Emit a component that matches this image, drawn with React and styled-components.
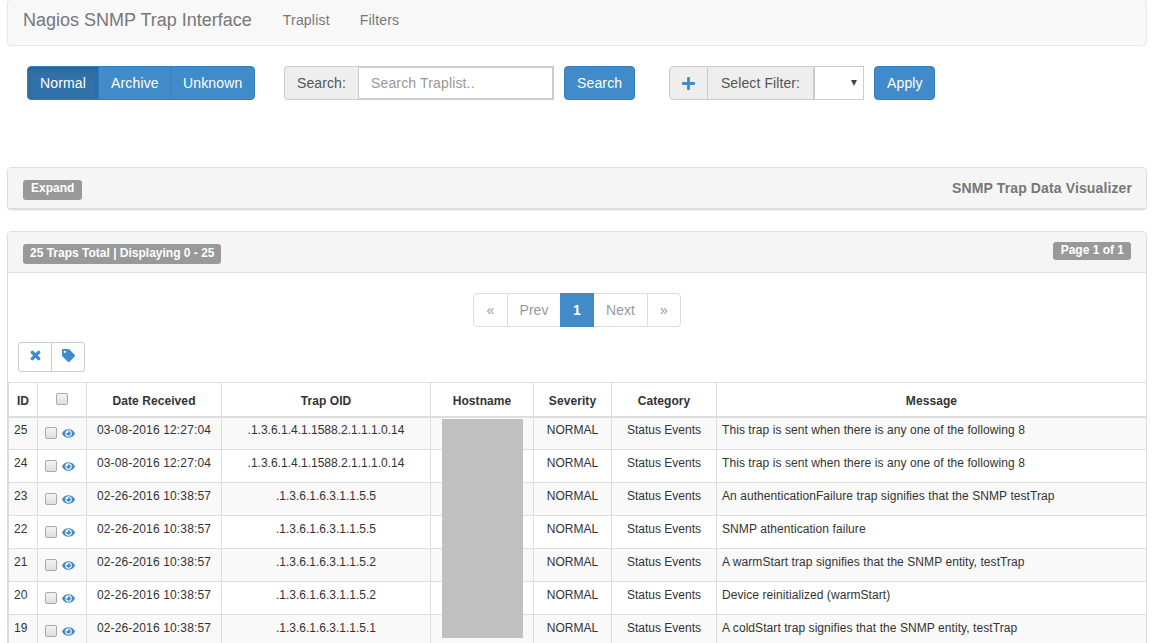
import React from 'react'
import styled, { createGlobalStyle } from 'styled-components'
import { FaEye, FaPlus, FaTag, FaTimes } from 'react-icons/fa'

const GlobalStyle = createGlobalStyle`
  html, body {
    margin: 0;
    height: 643px;
    overflow: hidden;
    background: #fff;
    font-family: "Liberation Sans", Arial, sans-serif;
    font-size: 14px;
    color: #333;
  }
  * { box-sizing: border-box; }
`

const Page = styled.div`
  padding: 0 7px;
`

const Navbar = styled.nav`
  display: flex;
  align-items: center;
  height: 47px;
  margin-top: -1px;
  background: #f8f8f8;
  border: 1px solid #e7e7e7;
  border-radius: 4px;
  padding: 0 0 5px 15px;
`

const Brand = styled.span`
  font-size: 18px;
  color: #777;
  margin-right: 31px;
`

const NavLink = styled.span`
  color: #777;
  margin-right: 30px;
  letter-spacing: .2px;
`

const Toolbar = styled.div`
  display: flex;
  align-items: flex-start;
  height: 121px;
  padding: 20px 0 0 20px;
`

const BtnGroup = styled.div`
  display: flex;
  margin-right: ${p => p.$gap || 0}px;
`

const Btn = styled.button`
  height: 34px;
  width: ${p => (p.$width ? `${p.$width}px` : 'auto')};
  padding: 0 12px;
  font: inherit;
  letter-spacing: .15px;
  white-space: nowrap;
  color: #fff;
  background: ${p => (p.$active ? '#3071a9' : '#428bca')};
  border: 1px solid #357ebd;
  border-radius: 4px;
  margin-right: ${p => p.$gap || 0}px;
  box-shadow: ${p => (p.$active ? 'inset 0 3px 5px rgba(0,0,0,.125)' : 'none')};
  ${BtnGroup} > & {
    border-radius: 0;
    margin-left: -1px;
  }
  ${BtnGroup} > &:first-child {
    border-radius: 4px 0 0 4px;
    margin-left: 0;
  }
  ${BtnGroup} > &:last-child {
    border-radius: 0 4px 4px 0;
  }
`

const InputGroup = styled.div`
  display: flex;
  height: 34px;
  margin-right: ${p => p.$gap || 0}px;
`

const Addon = styled.span`
  display: flex;
  align-items: center;
  justify-content: center;
  width: ${p => p.$width}px;
  background: #eee;
  border: 1px solid #ccc;
  border-right: ${p => (p.$last ? '0' : '1px solid #ccc')};
  border-radius: ${p => (p.$first ? '4px 0 0 4px' : '0')};
  margin-right: ${p => (p.$last ? 0 : -1)}px;
  color: #555;
  letter-spacing: .1px;
  svg { color: #428bca; font-size: 15px; }
`

const TextInput = styled.div`
  display: flex;
  align-items: center;
  width: ${p => p.$width}px;
  padding: 0 12px;
  background: #fff;
  border: 1px solid #ccc;
  border-width: 2px 2px 2px 1px;
  color: #999;
  letter-spacing: .15px;
`

const SelectBox = styled.div`
  position: relative;
  width: 51px;
  background: #fff;
  border: 1px solid #ccc;
  border-left-width: 2px;
  &::after {
    content: '';
    position: absolute;
    right: 6px;
    top: 13px;
    border-left: 3px solid transparent;
    border-right: 3px solid transparent;
    border-top: 6px solid #444;
  }
`

const Panel = styled.section`
  position: relative;
  background: #fff;
  border: 1px solid #ddd;
  border-radius: 4px;
  box-shadow: 0 1px 1px rgba(0, 0, 0, .05);
  margin-bottom: ${p => p.$gap || 0}px;
`

const PanelHeading = styled.div`
  display: flex;
  justify-content: space-between;
  align-items: ${p => p.$align || 'center'};
  height: ${p => p.$height}px;
  padding: ${p => p.$padding || '0 14px 0 15px'};
  background: #f5f5f5;
  border-bottom: 1px solid #ddd;
  border-radius: 3px 3px 0 0;
`

const Label = styled.span`
  display: inline-block;
  background: #999;
  color: #fff;
  font-size: 12px;
  font-weight: bold;
  line-height: 12px;
  padding: ${p => p.$padding || '4px 7px'};
  margin-top: ${p => p.$top || 0}px;
  border-radius: 3px;
`

const VisualizerTitle = styled.span`
  font-size: 14px;
  font-weight: bold;
  color: #777;
  letter-spacing: .12px;
`

const Pager = styled.div`
  display: flex;
  justify-content: center;
  padding-top: 20px;
  height: 69px;
`

const PageCell = styled.span`
  position: relative;
  z-index: ${p => (p.$active ? 1 : 0)};
  display: flex;
  align-items: center;
  justify-content: center;
  height: 34px;
  width: ${p => p.$width}px;
  margin-left: -1px;
  color: ${p => (p.$active ? '#fff' : '#999')};
  font-weight: ${p => (p.$active ? 'bold' : 'normal')};
  background: ${p => (p.$active ? '#428bca' : '#fff')};
  border: 1px solid ${p => (p.$active ? '#428bca' : '#ddd')};
  &:first-child { border-radius: 4px 0 0 4px; margin-left: 0; }
  &:last-child { border-radius: 0 4px 4px 0; }
`

const IconBar = styled.div`
  display: flex;
  padding-left: 10px;
  height: 40px;
`

const IconBtn = styled.span`
  display: flex;
  align-items: center;
  justify-content: center;
  width: 34px;
  height: 30px;
  padding-bottom: 3px;
  margin-right: -1px;
  border: 1px solid #ccc;
  color: #428bca;
  font-size: 13px;
  &:first-child { border-radius: 3px 0 0 3px; }
  &:last-child { border-radius: 0 3px 3px 0; }
`

const Table = styled.table`
  width: 1138px;
  table-layout: fixed;
  border-collapse: collapse;
  font-size: 12px;
`

const Th = styled.th`
  height: 34px;
  border: 1px solid #ddd;
  border-bottom: 2px solid #ddd;
  font-weight: bold;
  text-align: center;
  vertical-align: middle;
  color: #333;
  padding: 4px 5px 0;
  letter-spacing: .08px;
`

const Row = styled.tr`
  background: ${p => (p.$odd ? '#f9f9f9' : '#fff')};
`

const Td = styled.td`
  height: 33px;
  border: 1px solid #ddd;
  padding: 0 5px 7px;
  text-align: ${p => p.$align || 'center'};
  vertical-align: middle;
  white-space: nowrap;
  overflow: hidden;
  letter-spacing: ${p => p.$spacing || 0}px;
`

const ActionCell = styled.div`
  display: flex;
  align-items: center;
  gap: 5px;
  padding: 7px 0 0 2px;
  svg { color: #428bca; font-size: 13px; }
`

const Check = styled.span`
  display: inline-block;
  width: 12px;
  height: 12px;
  background: linear-gradient(#f4f4f4, #dedede);
  border: 1px solid #aaa;
  border-radius: 2px;
`

const HeaderCheck = styled(Check)`
  display: block;
  margin: 0 auto 4px;
`

const Redaction = styled.div`
  position: absolute;
  left: 434px;
  top: 187px;
  width: 81px;
  height: 219px;
  background: #c0c0c0;
`

const cols = [29, 49, 135, 209, 103, 78, 105, 430]

const traps = [
  [25, '03-08-2016 12:27:04', '.1.3.6.1.4.1.1588.2.1.1.1.0.14', 'This trap is sent when there is any one of the following 8'],
  [24, '03-08-2016 12:27:04', '.1.3.6.1.4.1.1588.2.1.1.1.0.14', 'This trap is sent when there is any one of the following 8'],
  [23, '02-26-2016 10:38:57', '.1.3.6.1.6.3.1.1.5.5', 'An authenticationFailure trap signifies that the SNMP testTrap'],
  [22, '02-26-2016 10:38:57', '.1.3.6.1.6.3.1.1.5.5', 'SNMP athentication failure'],
  [21, '02-26-2016 10:38:57', '.1.3.6.1.6.3.1.1.5.2', 'A warmStart trap signifies that the SNMP entity, testTrap'],
  [20, '02-26-2016 10:38:57', '.1.3.6.1.6.3.1.1.5.2', 'Device reinitialized (warmStart)'],
  [19, '02-26-2016 10:38:57', '.1.3.6.1.6.3.1.1.5.1', 'A coldStart trap signifies that the SNMP entity, testTrap'],
]

export default function App() {
  return (
    <Page>
      <GlobalStyle />
      <Navbar>
        <Brand>Nagios SNMP Trap Interface</Brand>
        <NavLink>Traplist</NavLink>
        <NavLink>Filters</NavLink>
      </Navbar>

      <Toolbar>
        <BtnGroup $gap={29}>
          <Btn $active $width={72}>Normal</Btn>
          <Btn $width={73}>Archive</Btn>
          <Btn $width={85}>Unknown</Btn>
        </BtnGroup>
        <InputGroup $gap={10}>
          <Addon $first $last $width={74}>Search:</Addon>
          <TextInput $width={196}>Search Traplist..</TextInput>
        </InputGroup>
        <Btn $gap={34} $width={71}>Search</Btn>
        <InputGroup $gap={10}>
          <Addon $first $width={39}><FaPlus /></Addon>
          <Addon $last $width={106}>Select Filter:</Addon>
          <SelectBox />
        </InputGroup>
        <Btn $width={61}>Apply</Btn>
      </Toolbar>

      <Panel $gap={21}>
        <PanelHeading $height={41}>
          <Label $top={4} $padding="2px 8px 6px">Expand</Label>
          <VisualizerTitle>SNMP Trap Data Visualizer</VisualizerTitle>
        </PanelHeading>
      </Panel>

      <Panel>
        <PanelHeading $height={41} $align="flex-start" $padding="10px 15px 0 15px">
          <Label $top={2} $padding="3px 6px 5px 7px">25 Traps Total | Displaying 0 - 25</Label>
          <Label $padding="2px 7px 4px 8px">Page 1 of 1</Label>
        </PanelHeading>
        <Pager>
          <PageCell $width={35}>«</PageCell>
          <PageCell $width={54}>Prev</PageCell>
          <PageCell $width={34} $active>1</PageCell>
          <PageCell $width={55}>Next</PageCell>
          <PageCell $width={34}>»</PageCell>
        </Pager>
        <IconBar>
          <IconBtn><FaTimes stroke="currentColor" strokeWidth={40} /></IconBtn>
          <IconBtn><FaTag /></IconBtn>
        </IconBar>
        <Table>
          <colgroup>
            {cols.map((w, i) => <col key={i} width={w} />)}
          </colgroup>
          <thead>
            <tr>
              <Th>ID</Th>
              <Th><HeaderCheck /></Th>
              <Th>Date Received</Th>
              <Th>Trap OID</Th>
              <Th>Hostname</Th>
              <Th>Severity</Th>
              <Th>Category</Th>
              <Th>Message</Th>
            </tr>
          </thead>
          <tbody>
            {traps.map(([id, date, oid, message], i) => (
              <Row key={id} $odd={i % 2 === 0}>
                <Td $align="left">{id}</Td>
                <Td><ActionCell><Check /><FaEye /></ActionCell></Td>
                <Td $spacing={0.14}>{date}</Td>
                <Td>{oid}</Td>
                <Td />
                <Td>NORMAL</Td>
                <Td>Status Events</Td>
                <Td $align="left" $spacing={0.07}>{message}</Td>
              </Row>
            ))}
          </tbody>
        </Table>
        <Redaction />
      </Panel>
    </Page>
  )
}
